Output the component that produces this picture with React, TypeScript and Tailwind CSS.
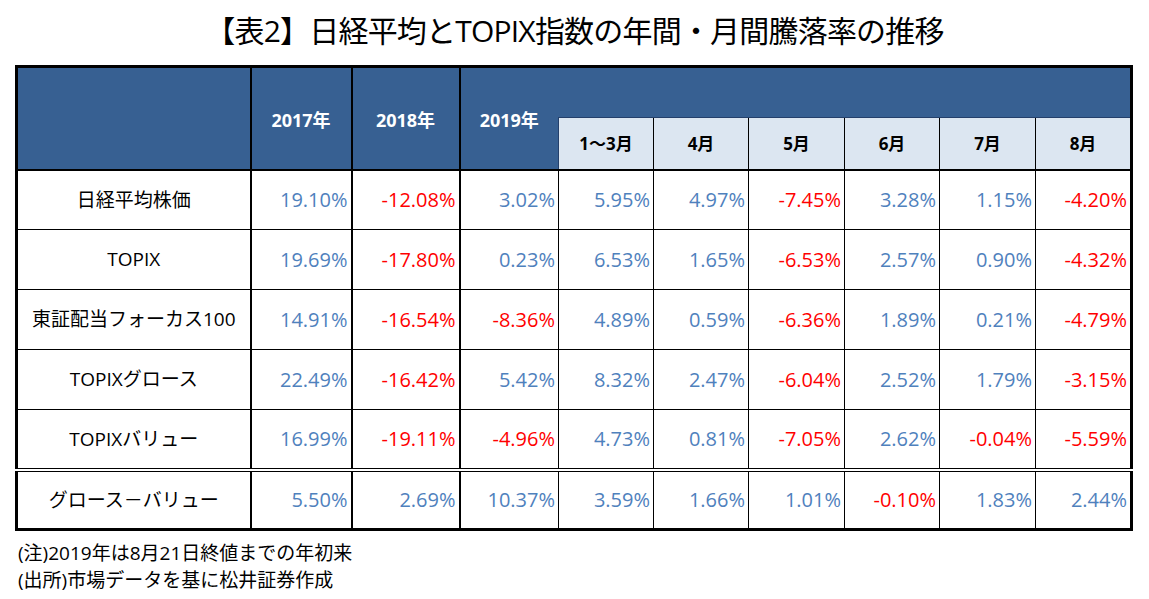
const rows: { label: string; values: string[] }[] = [
  { label: "日経平均株価", values: ["19.10%", "-12.08%", "3.02%", "5.95%", "4.97%", "-7.45%", "3.28%", "1.15%", "-4.20%"] },
  { label: "TOPIX", values: ["19.69%", "-17.80%", "0.23%", "6.53%", "1.65%", "-6.53%", "2.57%", "0.90%", "-4.32%"] },
  { label: "東証配当フォーカス100", values: ["14.91%", "-16.54%", "-8.36%", "4.89%", "0.59%", "-6.36%", "1.89%", "0.21%", "-4.79%"] },
  { label: "TOPIXグロース", values: ["22.49%", "-16.42%", "5.42%", "8.32%", "2.47%", "-6.04%", "2.52%", "1.79%", "-3.15%"] },
  { label: "TOPIXバリュー", values: ["16.99%", "-19.11%", "-4.96%", "4.73%", "0.81%", "-7.05%", "2.62%", "-0.04%", "-5.59%"] },
  { label: "グロース－バリュー", values: ["5.50%", "2.69%", "10.37%", "3.59%", "1.66%", "1.01%", "-0.10%", "1.83%", "2.44%"] },
];

const months = ["1～3月", "4月", "5月", "6月", "7月", "8月"];
const colWidths = [234, 101, 108, 99, 95, 95, 96, 95, 96, 96];

const jp = { fontFamily: '"Open Sans", "Noto Sans CJK JP", sans-serif' };

export default function App() {
  return (
    <div className="w-[1149px] h-[599px] bg-white text-black" style={jp}>
      <div className="h-[65px] flex items-center justify-center pb-1">
        <h1 className="text-[30px] leading-none tracking-[-0.8px] font-normal">
          【表2】日経平均とTOPIX指数の年間・月間騰落率の推移
        </h1>
      </div>

      <table className="ml-[15px] w-[1118px] table-fixed border-collapse border-[3px] border-black">
        <colgroup>
          {colWidths.map((w, i) => (
            <col key={i} style={{ width: w }} />
          ))}
        </colgroup>
        <thead>
          <tr className="h-[51px] bg-[#376092]">
            <th rowSpan={2} className="border-r-2 border-b-2 border-black" />
            <th rowSpan={2} className="border-r-2 border-b-2 border-black text-white text-[18px] font-bold pt-1">
              2017年
            </th>
            <th rowSpan={2} className="border-r-2 border-b-2 border-black text-white text-[18px] font-bold pt-1">
              2018年
            </th>
            <th rowSpan={2} className="border-b-2 border-black text-white text-[18px] font-bold pt-1">
              2019年
            </th>
            <th colSpan={6} />
          </tr>
          <tr className="h-[52px]">
            {months.map((m, i) => (
              <th
                key={m}
                className={`bg-[#dce6f1] border-b-2 border-b-black border-t border-t-[#24406b] text-[17px] font-bold ${
                  i === 0 ? "border-l border-l-[#24406b]" : "border-l border-l-black"
                }`}
              >
                {m}
              </th>
            ))}
          </tr>
        </thead>
        <tbody>
          {rows.map((r, ri) => (
            <tr
              key={r.label}
              className={`h-[60px] ${
                ri === 4
                  ? "border-b-4 border-double border-black"
                  : "border-b border-black"
              }`}
            >
              <td className="border-r-2 border-black text-center text-[19px]">{r.label}</td>
              {r.values.map((v, vi) => (
                <td
                  key={vi}
                  className={`text-right pr-[3px] text-[20px] ${
                    v.startsWith("-") ? "text-[#ff0000]" : "text-[#4f81bd]"
                  } ${vi < 2 ? "border-r-2 border-black" : "border-r border-black"}`}
                >
                  {v}
                </td>
              ))}
            </tr>
          ))}
        </tbody>
      </table>

      <div className="ml-[18px] mt-[9px] text-[19px] leading-[27px]">
        <div>(注)2019年は8月21日終値までの年初来</div>
        <div>(出所)市場データを基に松井証券作成</div>
      </div>
    </div>
  );
}
